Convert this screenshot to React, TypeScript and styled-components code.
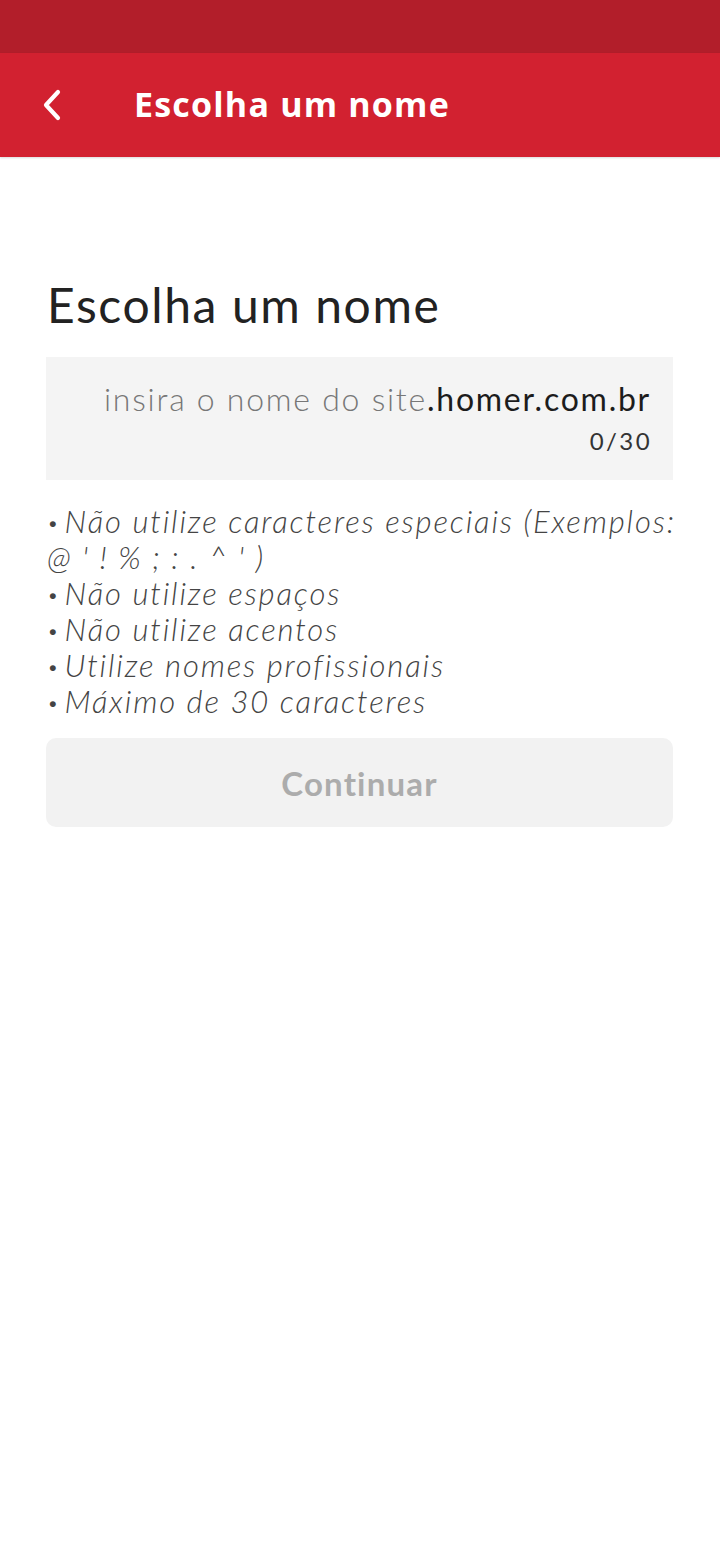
import React from "react";
import styled, { createGlobalStyle } from "styled-components";

const Global = createGlobalStyle`
  html, body { margin: 0; padding: 0; background: #ffffff; }
  body { font-family: Lato, "Open Sans", sans-serif; }
  * { box-sizing: border-box; }
`;

const Page = styled.div`
  width: 720px;
  min-height: 1558px;
  background: #ffffff;
  display: flex;
  flex-direction: column;
`;

const StatusBar = styled.div`
  height: 53px;
  background: #b21e2a;
`;

const AppBar = styled.header`
  height: 104px;
  background: #d22130;
  display: flex;
  align-items: center;
  padding-left: 38px;
  gap: 68px;
  box-shadow: 0 1px 2px rgba(0,0,0,0.15);
`;

const BackButton = styled.button`
  border: none;
  background: none;
  padding: 0;
  width: 28px;
  height: 34px;
  display: flex;
  align-items: center;
  justify-content: center;
  cursor: pointer;
`;

const AppTitle = styled.h1`
  margin: 0;
  color: #ffffff;
  font-family: "Open Sans", Lato, sans-serif;
  font-weight: 700;
  font-size: 34px;
  letter-spacing: 1.2px;
  margin-top: -2px;
`;

const Content = styled.main`
  padding: 118px 47px 0 46px;
  display: flex;
  flex-direction: column;
`;

const Heading = styled.h2`
  margin: 0 0 22px 1px;
  font-family: Lato, sans-serif;
  font-weight: 400;
  font-size: 48px;
  line-height: 60px;
  color: #222222;
  letter-spacing: 1.6px;
`;

const InputBox = styled.div`
  background: #f4f4f4;
  height: 123px;
  padding: 22px 23px 0 0;
  display: flex;
  flex-direction: column;
  align-items: flex-end;
`;

const InputLine = styled.div`
  font-family: Lato, sans-serif;
  font-size: 32px;
  line-height: 40px;
  letter-spacing: 1.75px;
  margin-right: -1px;
`;

const Placeholder = styled.span`
  color: #777777;
  font-weight: 300;
`;

const Suffix = styled.span`
  color: #1c1c1c;
  font-weight: 400;
`;

const Counter = styled.div`
  font-family: Lato, sans-serif;
  font-size: 24px;
  line-height: 30px;
  color: #333333;
  margin-top: 7px;
  letter-spacing: 2.4px;
  margin-right: -2px;
`;

const Rules = styled.ul`
  list-style: none;
  margin: 23px 0 0 1px;
  padding: 0;
  font-family: Lato, sans-serif;
  font-style: italic;
  font-weight: 300;
  font-size: 31px;
  line-height: 36px;
  color: #444444;
  letter-spacing: 1.85px;
`;

const Rule = styled.li`
  white-space: nowrap;
  height: 36px;
`;

const Dot = styled.span`
  display: inline-block;
  font-style: normal;
  font-size: 20px;
  line-height: 20px;
  transform: translateY(-3px);
  margin-right: 6px;
  letter-spacing: 0;
`;

const ContinueButton = styled.button`
  margin-top: 19px;
  height: 89px;
  border: none;
  border-radius: 10px;
  background: #f2f2f2;
  color: #acacac;
  font-family: Lato, sans-serif;
  font-weight: 700;
  font-size: 33px;
  letter-spacing: 1.2px;
  cursor: default;
`;

const rules = [
  "Não utilize espaços",
  "Não utilize acentos",
  "Utilize nomes profissionais",
  "Máximo de 30 caracteres",
];

export default function App() {
  return (
    <Page>
      <Global />
      <StatusBar />
      <AppBar>
        <BackButton aria-label="Voltar">
          <svg width="22" height="32" viewBox="0 0 22 32" fill="none">
            <path d="M17 3 L5 16 L17 29" stroke="#ffffff" strokeWidth="4.2" strokeLinecap="round" strokeLinejoin="round" />
          </svg>
        </BackButton>
        <AppTitle>Escolha um nome</AppTitle>
      </AppBar>
      <Content>
        <Heading>Escolha um nome</Heading>
        <InputBox>
          <InputLine>
            <Placeholder>insira o nome do site</Placeholder>
            <Suffix>.homer.com.br</Suffix>
          </InputLine>
          <Counter>0/30</Counter>
        </InputBox>
        <Rules>
          <Rule><Dot>•</Dot>Não utilize caracteres especiais (Exemplos:</Rule>
          <Rule>@ ' ! % ; : . ^ ' )</Rule>
          {rules.map((r) => (
            <Rule key={r}><Dot>•</Dot>{r}</Rule>
          ))}
        </Rules>
        <ContinueButton disabled>Continuar</ContinueButton>
      </Content>
    </Page>
  );
}
